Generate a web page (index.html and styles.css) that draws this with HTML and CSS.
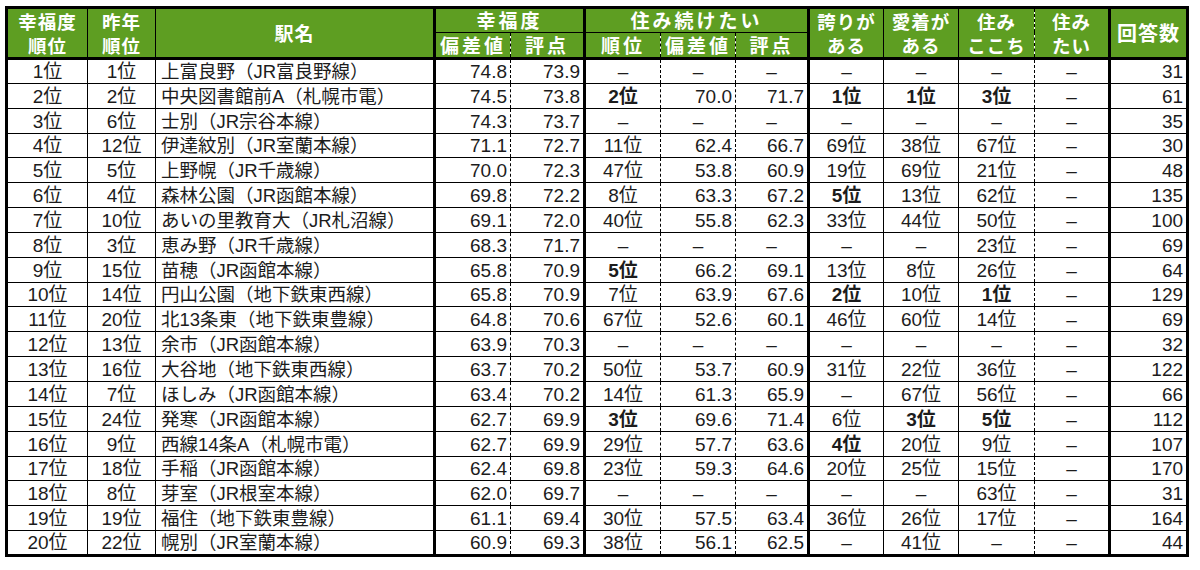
FILE: index.html
```html
<!DOCTYPE html>
<html lang="ja">
<head>
<meta charset="utf-8">
<link rel="stylesheet" href="styles.css">
</head>
<body>
<table class="tbl">
<colgroup>
<col style="width:81px"><col style="width:68px"><col style="width:279px"><col style="width:76px"><col style="width:74px"><col style="width:76px"><col style="width:75px"><col style="width:73px"><col style="width:75px"><col style="width:75px"><col style="width:76px"><col style="width:75px"><col style="width:78px">
</colgroup>
<thead>
<tr class="h1">
<th rowspan="2" class="two">幸福度<br>順位</th>
<th rowspan="2" class="two">昨年<br>順位</th>
<th rowspan="2" class="tr">駅名</th>
<th colspan="2" class="tr grp">幸福度</th>
<th colspan="3" class="tr grp">住み続けたい</th>
<th rowspan="2" class="two">誇りが<br>ある</th>
<th rowspan="2" class="two">愛着が<br>ある</th>
<th rowspan="2" class="two dr">住み<br>ここち</th>
<th rowspan="2" class="two dl tr">住み<br>たい</th>
<th rowspan="2" class="big">回答数</th>
</tr>
<tr class="h2">
<th class="dr">偏差値</th>
<th class="dl tr">評点</th>
<th class="dr">順位</th>
<th class="dl dr">偏差値</th>
<th class="dl tr">評点</th>
</tr>
</thead>
<tbody>
<tr><td>1位</td><td>1位</td><td>上富良野（JR富良野線）</td><td>74.8</td><td>73.9</td><td>–</td><td class="c">–</td><td class="c">–</td><td>–</td><td>–</td><td>–</td><td>–</td><td>31</td></tr>
<tr><td>2位</td><td>2位</td><td>中央図書館前A（札幌市電）</td><td>74.5</td><td>73.8</td><td class="b">2位</td><td>70.0</td><td>71.7</td><td class="b">1位</td><td class="b">1位</td><td class="b">3位</td><td>–</td><td>61</td></tr>
<tr><td>3位</td><td>6位</td><td>士別（JR宗谷本線）</td><td>74.3</td><td>73.7</td><td>–</td><td class="c">–</td><td class="c">–</td><td>–</td><td>–</td><td>–</td><td>–</td><td>35</td></tr>
<tr><td>4位</td><td>12位</td><td>伊達紋別（JR室蘭本線）</td><td>71.1</td><td>72.7</td><td>11位</td><td>62.4</td><td>66.7</td><td>69位</td><td>38位</td><td>67位</td><td>–</td><td>30</td></tr>
<tr><td>5位</td><td>5位</td><td>上野幌（JR千歳線）</td><td>70.0</td><td>72.3</td><td>47位</td><td>53.8</td><td>60.9</td><td>19位</td><td>69位</td><td>21位</td><td>–</td><td>48</td></tr>
<tr><td>6位</td><td>4位</td><td>森林公園（JR函館本線）</td><td>69.8</td><td>72.2</td><td>8位</td><td>63.3</td><td>67.2</td><td class="b">5位</td><td>13位</td><td>62位</td><td>–</td><td>135</td></tr>
<tr><td>7位</td><td>10位</td><td>あいの里教育大（JR札沼線）</td><td>69.1</td><td>72.0</td><td>40位</td><td>55.8</td><td>62.3</td><td>33位</td><td>44位</td><td>50位</td><td>–</td><td>100</td></tr>
<tr><td>8位</td><td>3位</td><td>恵み野（JR千歳線）</td><td>68.3</td><td>71.7</td><td>–</td><td class="c">–</td><td class="c">–</td><td>–</td><td>–</td><td>23位</td><td>–</td><td>69</td></tr>
<tr><td>9位</td><td>15位</td><td>苗穂（JR函館本線）</td><td>65.8</td><td>70.9</td><td class="b">5位</td><td>66.2</td><td>69.1</td><td>13位</td><td>8位</td><td>26位</td><td>–</td><td>64</td></tr>
<tr><td>10位</td><td>14位</td><td>円山公園（地下鉄東西線）</td><td>65.8</td><td>70.9</td><td>7位</td><td>63.9</td><td>67.6</td><td class="b">2位</td><td>10位</td><td class="b">1位</td><td>–</td><td>129</td></tr>
<tr><td>11位</td><td>20位</td><td>北13条東（地下鉄東豊線）</td><td>64.8</td><td>70.6</td><td>67位</td><td>52.6</td><td>60.1</td><td>46位</td><td>60位</td><td>14位</td><td>–</td><td>69</td></tr>
<tr><td>12位</td><td>13位</td><td>余市（JR函館本線）</td><td>63.9</td><td>70.3</td><td>–</td><td class="c">–</td><td class="c">–</td><td>–</td><td>–</td><td>–</td><td>–</td><td>32</td></tr>
<tr><td>13位</td><td>16位</td><td>大谷地（地下鉄東西線）</td><td>63.7</td><td>70.2</td><td>50位</td><td>53.7</td><td>60.9</td><td>31位</td><td>22位</td><td>36位</td><td>–</td><td>122</td></tr>
<tr><td>14位</td><td>7位</td><td>ほしみ（JR函館本線）</td><td>63.4</td><td>70.2</td><td>14位</td><td>61.3</td><td>65.9</td><td>–</td><td>67位</td><td>56位</td><td>–</td><td>66</td></tr>
<tr><td>15位</td><td>24位</td><td>発寒（JR函館本線）</td><td>62.7</td><td>69.9</td><td class="b">3位</td><td>69.6</td><td>71.4</td><td>6位</td><td class="b">3位</td><td class="b">5位</td><td>–</td><td>112</td></tr>
<tr><td>16位</td><td>9位</td><td>西線14条A（札幌市電）</td><td>62.7</td><td>69.9</td><td>29位</td><td>57.7</td><td>63.6</td><td class="b">4位</td><td>20位</td><td>9位</td><td>–</td><td>107</td></tr>
<tr><td>17位</td><td>18位</td><td>手稲（JR函館本線）</td><td>62.4</td><td>69.8</td><td>23位</td><td>59.3</td><td>64.6</td><td>20位</td><td>25位</td><td>15位</td><td>–</td><td>170</td></tr>
<tr><td>18位</td><td>8位</td><td>芽室（JR根室本線）</td><td>62.0</td><td>69.7</td><td>–</td><td class="c">–</td><td class="c">–</td><td>–</td><td>–</td><td>63位</td><td>–</td><td>31</td></tr>
<tr><td>19位</td><td>19位</td><td>福住（地下鉄東豊線）</td><td>61.1</td><td>69.4</td><td>30位</td><td>57.5</td><td>63.4</td><td>36位</td><td>26位</td><td>17位</td><td>–</td><td>164</td></tr>
<tr><td>20位</td><td>22位</td><td>幌別（JR室蘭本線）</td><td>60.9</td><td>69.3</td><td>38位</td><td>56.1</td><td>62.5</td><td>–</td><td>41位</td><td>–</td><td>–</td><td>44</td></tr>
</tbody>
</table>
</body>
</html>
```

FILE: styles.css
```css
html, body {
  margin: 0;
  padding: 0;
  background: #ffffff;
}

body {
  padding: 6px 0 0 5px;
}

.tbl {
  border-collapse: collapse;
  table-layout: fixed;
  width: 1184px;
  border: 3px solid #000;
  font-family: "Liberation Sans", "Noto Sans CJK JP", sans-serif;
  color: #1c1c1c;
}

.tbl th {
  background: #5e9e22;
  color: #ffffff;
  font-family: "Noto Sans CJK JP", sans-serif;
  font-weight: 700;
  font-size: 19px;
  line-height: 24px;
  letter-spacing: 1px;
  border: 1px solid #000;
  padding: 0;
  text-align: center;
  vertical-align: middle;
  overflow: hidden;
}

.tbl th.two {
  font-size: 18.5px;
  line-height: 24px;
}

.tbl .h1 {
  height: 24px;
}

.tbl .h2 {
  height: 25px;
}

.tbl .h1 th {
  border-bottom: 3px solid #000;
}

.tbl .h1 th.grp {
  border-bottom: 1px solid #000;
  letter-spacing: 3px;
  line-height: 22px;
}

.tbl .h2 th {
  border-bottom: 3px solid #000;
  letter-spacing: 3px;
  line-height: 22px;
}

.tbl th.big {
  font-size: 20px;
}

.tbl th.tr {
  border-right: 3px solid #000;
}

.tbl th.dr {
  border-right: 1px dashed #000;
}

.tbl th.dl {
  border-left: 1px dashed #000;
}

.tbl tbody tr {
  height: 24.85px;
}

.tbl td {
  border: 1px solid #000;
  padding: 0 3px;
  font-size: 19px;
  line-height: 22px;
  text-align: center;
  vertical-align: bottom;
  white-space: nowrap;
  overflow: hidden;
}

.tbl td:nth-child(3) {
  text-align: left;
  padding-left: 5px;
  border-right: 3px solid #000;
  font-size: 18.5px;
}

.tbl td:nth-child(4),
.tbl td:nth-child(5),
.tbl td:nth-child(7),
.tbl td:nth-child(8),
.tbl td:nth-child(13) {
  text-align: right;
  padding-right: 3px;
}

.tbl td.c {
  text-align: center;
}

.tbl td:nth-child(4),
.tbl td:nth-child(6),
.tbl td:nth-child(7),
.tbl td:nth-child(11) {
  border-right: 1px dashed #000;
}

.tbl td:nth-child(5),
.tbl td:nth-child(7),
.tbl td:nth-child(8),
.tbl td:nth-child(12) {
  border-left: 1px dashed #000;
}

.tbl td:nth-child(5),
.tbl td:nth-child(8),
.tbl td:nth-child(12) {
  border-right: 3px solid #000;
}

.tbl td.b {
  font-weight: 700;
}
```
